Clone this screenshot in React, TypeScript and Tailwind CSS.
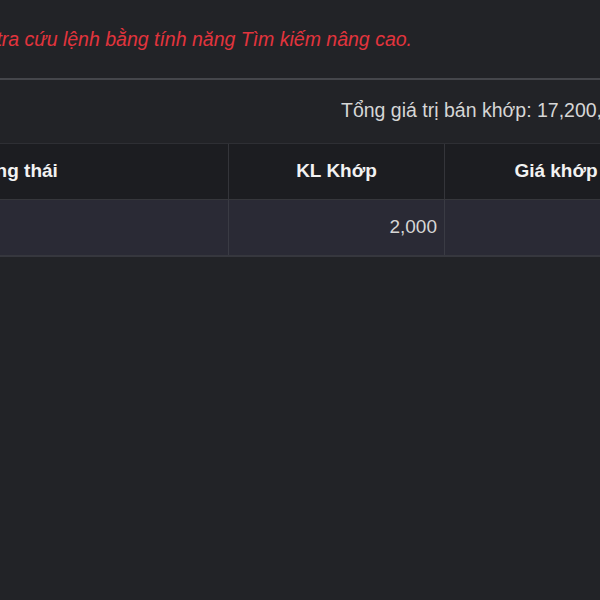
import React from 'react';

const columns = [
    { key: 'status', label: 'Trạng thái', width: 'w-[432px]' },
    { key: 'qty', label: 'KL Khớp', width: 'w-[216px]' },
    { key: 'price', label: 'Giá khớp', width: 'w-[222px]' },
];

const App: React.FC = () => {
    return (
        <div className="w-[600px] h-[600px] overflow-hidden bg-[#222327] font-['Liberation_Sans',Arial,sans-serif]">
            {/* notice */}
            <div className="h-[78px] flex items-center">
                <div className="w-[412px] shrink-0 flex justify-end">
                    <p className="whitespace-nowrap italic text-[19.5px] text-[#e2343d] pt-[2px]">
                        Quý khách vui lòng tra cứu lệnh bằng tính năng Tìm kiếm nâng cao.
                    </p>
                </div>
            </div>

            <div className="h-[66px] border-t-2 border-[#45464b] border-b border-b-[#2e2f34] flex items-center">
                <p className="pl-[341px] whitespace-nowrap text-[19.5px] text-[#d6d6d6] pb-[1px]">
                    Tổng giá trị bán khớp: 17,200,000
                </p>
            </div>

            <div className="ml-[-203px] w-[870px]">
                <div className="flex h-[56px] bg-[#1c1d21] border-b border-[#36373c]">
                    {columns.map((col, i) => (
                        <div
                            key={col.key}
                            className={`${col.width} shrink-0 flex items-center justify-center text-[19px] font-bold text-[#f2f2f2] ${i < columns.length - 1 ? 'border-r border-[#34353a]' : ''}`}
                        >
                            {col.label}
                        </div>
                    ))}
                </div>
                <div className="flex h-[57px] bg-[#2a2a35] border-b-2 border-[#36373e]">
                    <div className="w-[432px] shrink-0 border-r border-[#3a3b44]" />
                    <div className="w-[216px] shrink-0 flex items-center justify-end pr-[7px] text-[19px] text-[#d6d6d6] border-r border-[#3a3b44]">
                        2,000
                    </div>
                    <div className="w-[222px] shrink-0" />
                </div>
            </div>
        </div>
    );
};

export default App;
